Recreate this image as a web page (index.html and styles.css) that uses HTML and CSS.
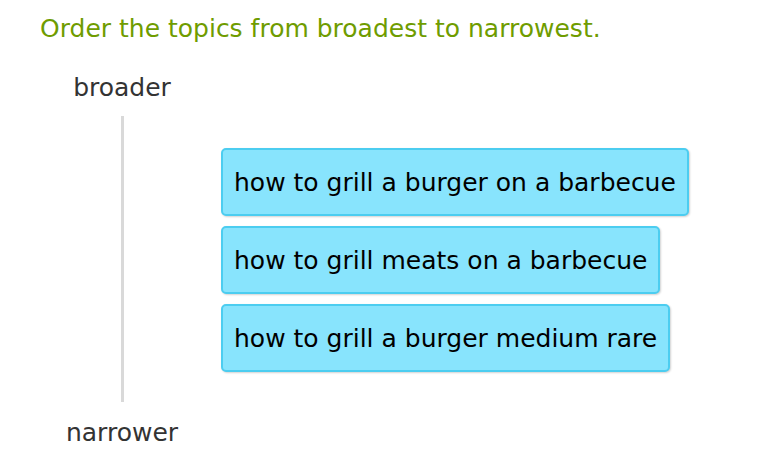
FILE: index.html
```html
<!DOCTYPE html>
<html>
<head>
<meta charset="utf-8">
<link rel="stylesheet" href="styles.css">
</head>
<body>
<p class="prompt">Order the topics from broadest to narrowest.</p>
<div class="board">
  <div class="label label-top">broader</div>
  <div class="axis-line"></div>
  <div class="cards">
    <div class="card">how to grill a burger on a barbecue</div>
    <div class="card">how to grill meats on a barbecue</div>
    <div class="card">how to grill a burger medium rare</div>
  </div>
  <div class="label label-bottom">narrower</div>
</div>
</body>
</html>
```
FILE: styles.css
```css
html, body {
  margin: 0;
  padding: 0;
  background: #ffffff;
}
body {
  font-family: "DejaVu Sans", Verdana, sans-serif;
  width: 781px;
  height: 473px;
  overflow: hidden;
}
.prompt {
  margin: 0;
  padding: 14px 0 0 40px;
  font-size: 25px;
  line-height: 30px;
  color: #6f9c00;
}
.board {
  display: grid;
  grid-template-columns: 164px auto;
  grid-template-rows: auto 1fr auto;
  padding-left: 40px;
  margin-top: 29px;
  justify-content: start;
}
.label {
  grid-column: 1;
  justify-self: center;
  font-size: 25px;
  line-height: 30px;
  color: #333333;
}
.label-top {
  grid-row: 1;
  margin-bottom: 13px;
}
.label-bottom {
  grid-row: 3;
  margin-top: 16px;
}
.axis-line {
  grid-column: 1;
  grid-row: 2;
  justify-self: center;
  width: 3px;
  background: #d9d9d9;
}
.cards {
  grid-column: 2;
  grid-row: 2;
  display: flex;
  flex-direction: column;
  align-items: flex-start;
  gap: 10px;
  padding: 32px 0 30px 17px;
}
.card {
  box-sizing: border-box;
  height: 68px;
  display: flex;
  align-items: center;
  background: #88e4fd;
  border: 2px solid #4ccdf0;
  border-radius: 5px;
  box-shadow: 1px 1px 2px rgba(0, 0, 0, 0.18);
  padding: 2px 11px 0 11px;
  font-size: 25px;
  line-height: 30px;
  color: #000000;
  white-space: nowrap;
}
```
